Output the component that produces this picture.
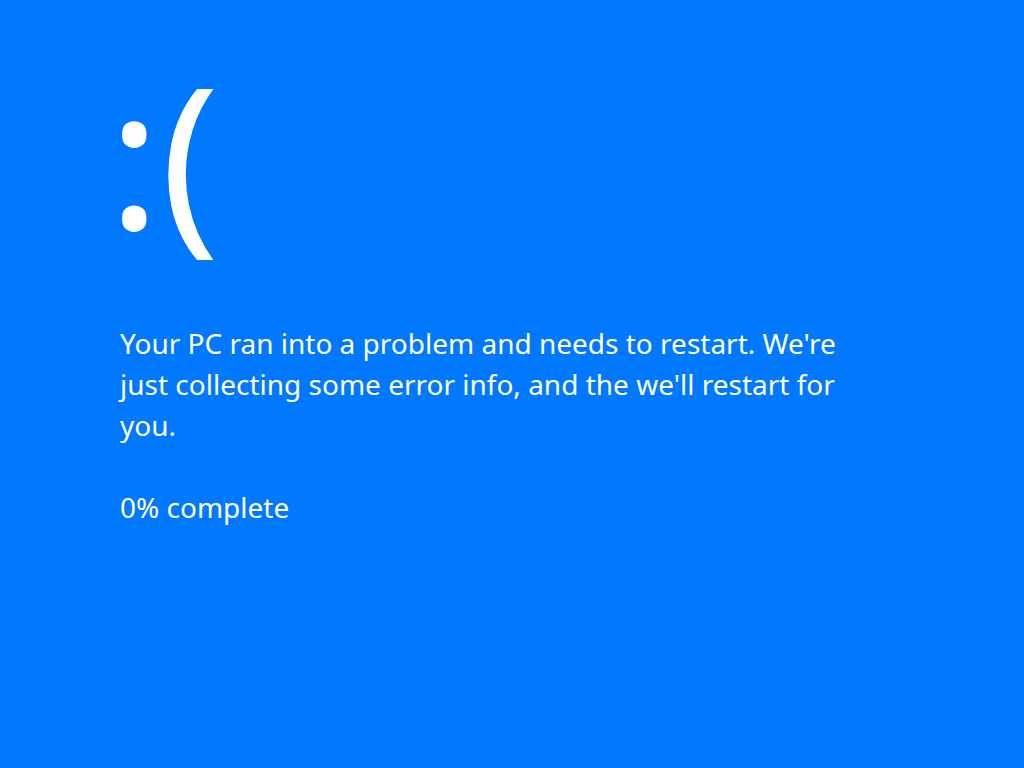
export default function App() {
  return (
    <div className="min-h-screen w-full bg-[#0078ff] text-white" style={{ fontFamily: '"Noto Sans", "Open Sans", sans-serif' }}>
      <div className="pl-[120px] pt-[33px]">
        <div className="-ml-[12px] text-[196px] leading-[240px] font-normal">:(</div>
        <p className="mt-[50px] max-w-[740px] text-[28px] leading-[41px]">
          Your PC ran into a problem and needs to restart. We're just collecting some error info, and the we'll restart for you.
        </p>
        <p className="mt-[41px] text-[28px] leading-[41px]">0% complete</p>
      </div>
    </div>
  );
}
